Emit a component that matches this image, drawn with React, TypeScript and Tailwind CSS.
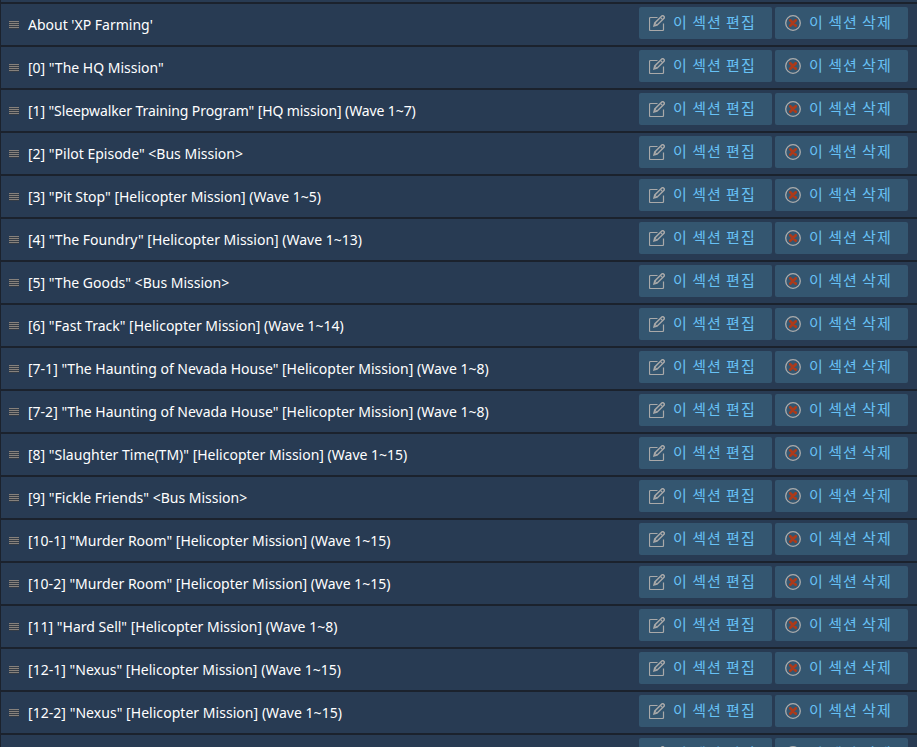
const sections = [
  { title: "About 'XP Farming'" },
  { title: '[0] "The HQ Mission"' },
  { title: '[1] "Sleepwalker Training Program" [HQ mission] (Wave 1~7)', spacing: "tracking-[-0.1px]" },
  { title: '[2] "Pilot Episode" <Bus Mission>' },
  { title: '[3] "Pit Stop" [Helicopter Mission] (Wave 1~5)' },
  { title: '[4] "The Foundry" [Helicopter Mission] (Wave 1~13)' },
  { title: '[5] "The Goods" <Bus Mission>' },
  { title: '[6] "Fast Track" [Helicopter Mission] (Wave 1~14)' },
  { title: '[7-1] "The Haunting of Nevada House" [Helicopter Mission] (Wave 1~8)' },
  { title: '[7-2] "The Haunting of Nevada House" [Helicopter Mission] (Wave 1~8)' },
  { title: '[8] "Slaughter Time(TM)" [Helicopter Mission] (Wave 1~15)' },
  { title: '[9] "Fickle Friends" <Bus Mission>' },
  { title: '[10-1] "Murder Room" [Helicopter Mission] (Wave 1~15)' },
  { title: '[10-2] "Murder Room" [Helicopter Mission] (Wave 1~15)' },
  { title: '[11] "Hard Sell" [Helicopter Mission] (Wave 1~8)' },
  { title: '[12-1] "Nexus" [Helicopter Mission] (Wave 1~15)', spacing: "tracking-[0.02px]" },
  { title: '[12-2] "Nexus" [Helicopter Mission] (Wave 1~15)', spacing: "tracking-[0.04px]" },
  { title: "" },
];

function DragHandle() {
  return (
    <svg width="10" height="8" viewBox="0 0 10 8" shapeRendering="crispEdges" className="shrink-0">
      <path d="M0 0h10v8H0z" fill="#343c46" />
      <path d="M0 .5h10M0 2.5h10M0 4.5h10M0 6.5h10" stroke="#86817c" />
    </svg>
  );
}

function EditIcon() {
  return (
    <svg width="16" height="16" viewBox="0 0 16 16" fill="none" stroke="#a9a9a9" className="shrink-0">
      <path d="M8.5 2.5h-7a1 1 0 0 0-1 1v11a1 1 0 0 0 1 1h12a1 1 0 0 0 1-1V8.5" strokeWidth="1.2" />
      <path d="M5 11l.8-3 7-7a1.2 1.2 0 0 1 1.7 0l.5.5a1.2 1.2 0 0 1 0 1.7l-7 7z" strokeWidth="1.5" />
      <path d="M11.4 2.4l2.2 2.2M5.8 8.2l2 2" strokeWidth="1.1" />
    </svg>
  );
}

function DeleteIcon() {
  return (
    <svg width="16" height="16" viewBox="0 0 16 16" fill="none" className="shrink-0">
      <circle cx="8" cy="8" r="7.3" stroke="#acacac" strokeWidth="1.3" />
      <path d="M5.2 5.2l5.6 5.6M10.8 5.2l-5.6 5.6" stroke="#ab3a1a" strokeWidth="2.7" strokeLinecap="round" />
    </svg>
  );
}

function SectionButton({ icon, label }: { icon: React.ReactNode; label: string }) {
  return (
    <button className="flex h-8 w-[133px] items-center gap-2 rounded-[2px] bg-[#345670] pl-2.5 text-left">
      {icon}
      <span className="-mt-0.5 whitespace-nowrap font-['Noto_Sans_CJK_KR',sans-serif] text-[15px] leading-8 tracking-[1px] text-[#67c1f5]">
        {label}
      </span>
    </button>
  );
}

export default function App() {
  return (
    <div className="h-[747px] w-[917px] overflow-hidden bg-[#1b222d] pl-px">
      <div className="mb-0.5 h-0.5 bg-[#283b53]" />
      <ul className="space-y-0.5">
        {sections.map(({ title, spacing = "" }, i) => (
          <li key={i} className="flex h-[41px] items-start bg-[#283b53] pr-[9px] pl-2">
            <div className="flex h-[42px] items-center">
              <DragHandle />
            </div>
            <span
              className={`ml-[9px] flex-1 whitespace-nowrap font-['Noto_Sans',sans-serif] text-[14px] leading-[41px] text-white ${spacing}`}
            >
              {title}
            </span>
            <div className="mt-[3px] flex gap-[3px]">
              <SectionButton icon={<EditIcon />} label="이 섹션 편집" />
              <SectionButton icon={<DeleteIcon />} label="이 섹션 삭제" />
            </div>
          </li>
        ))}
      </ul>
    </div>
  );
}
